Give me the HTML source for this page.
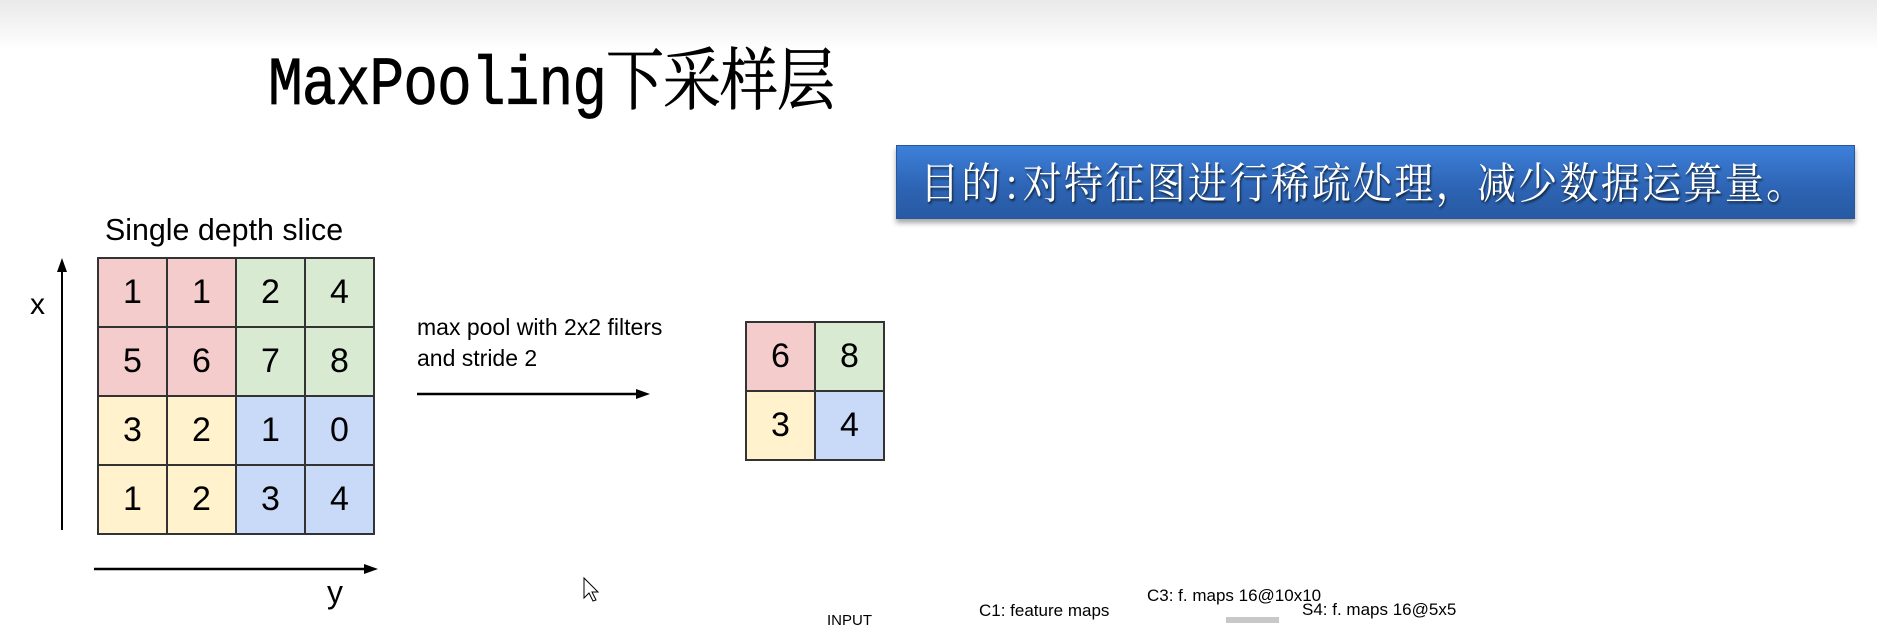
<!DOCTYPE html>
<html><head><meta charset="utf-8"><style>
html,body{margin:0;padding:0}
body{width:1877px;height:623px;position:relative;overflow:hidden;background:#fff;font-family:"Liberation Sans","Noto Sans CJK SC",sans-serif}
.top{position:absolute;left:0;top:0;width:1877px;height:50px;background:linear-gradient(#e9e9e9,#fff)}
.title{position:absolute;left:268px;top:46px;font-family:"Liberation Mono","Noto Serif CJK SC",monospace;font-size:58px;line-height:70px;color:#000;transform:scaleY(1.18);transform-origin:0 0;white-space:nowrap;letter-spacing:-1px;-webkit-text-stroke:0.6px #000}
.blue{position:absolute;left:896px;top:145px;width:957px;height:72px;background:linear-gradient(#3d80da,#2d63b3 60%,#275aa3);border:1px solid #2a579b;box-shadow:0 4px 5px rgba(0,0,0,.35)}
.blue .t{position:absolute;left:22px;top:11px;height:50px;display:flex;white-space:nowrap}
.blue .t i{font-style:normal;display:block;width:41.3px;text-align:center;font-family:"Noto Serif CJK SC","Noto Sans CJK SC",serif;font-size:39px;line-height:48px;color:#fff;text-shadow:1px 2px 2px #123;transform:scaleY(1.1)}
.blue .t i.c{width:20px}
.lbl{position:absolute;white-space:nowrap;color:#000}
table{position:absolute;border-collapse:collapse}
td{border:2px solid #333;width:67px;height:67px;text-align:center;font-size:34px;padding:0}
.r{background:#f4cccc}.g{background:#d9ead3}.y{background:#fff2cc}.b{background:#c9daf8}
</style></head><body>
<div class="top"></div>
<div class="title">MaxPooling下采样层</div>
<div class="blue"><div class="t"><i>目</i><i>的</i><i class="c">:</i><i>对</i><i>特</i><i>征</i><i>图</i><i>进</i><i>行</i><i>稀</i><i>疏</i><i>处</i><i>理</i><i>，</i><i>减</i><i>少</i><i>数</i><i>据</i><i>运</i><i>算</i><i>量</i><i>。</i></div></div>
<div class="lbl" style="left:105px;top:212px;font-size:31px;transform:scaleX(0.98);transform-origin:0 0">Single depth slice</div>
<table style="left:97px;top:257px">
<tr><td class="r">1</td><td class="r">1</td><td class="g">2</td><td class="g">4</td></tr>
<tr><td class="r">5</td><td class="r">6</td><td class="g">7</td><td class="g">8</td></tr>
<tr><td class="y">3</td><td class="y">2</td><td class="b">1</td><td class="b">0</td></tr>
<tr><td class="y">1</td><td class="y">2</td><td class="b">3</td><td class="b">4</td></tr>
</table>
<table style="left:745px;top:321px">
<tr><td class="r">6</td><td class="g">8</td></tr>
<tr><td class="y">3</td><td class="b">4</td></tr>
</table>
<svg style="position:absolute;left:0;top:0" width="1877" height="623">
<line x1="62" y1="530" x2="62" y2="270" stroke="#000" stroke-width="2"/>
<polygon points="62,258 57,272 67,272" fill="#000"/>
<line x1="94" y1="569" x2="365" y2="569" stroke="#000" stroke-width="2.5"/>
<polygon points="378,569 364,564 364,574" fill="#000"/>
<line x1="417" y1="394" x2="638" y2="394" stroke="#000" stroke-width="2.5"/>
<polygon points="650,394 636,389 636,399" fill="#000"/>
<path d="M584,578 L584,598 L589,593 L593,601 L596,600 L592,592 L598,592 Z" fill="#fff" stroke="#000" stroke-width="1"/>
<rect x="1226" y="617" width="53" height="8" fill="#c8c8c8"/>
</svg>
<div class="lbl" style="left:30px;top:288px;font-size:30px">x</div>
<div class="lbl" style="left:327px;top:574px;font-size:32px">y</div>
<div class="lbl" style="left:417px;top:312px;font-size:23px;line-height:31px">max pool with 2x2 filters<br>and stride 2</div>
<div class="lbl" style="left:827px;top:612px;font-size:15px">INPUT</div>
<div class="lbl" style="left:979px;top:601px;font-size:17px">C1: feature maps</div>
<div class="lbl" style="left:1147px;top:586px;font-size:17px">C3: f. maps 16@10x10</div>
<div class="lbl" style="left:1302px;top:600px;font-size:17px">S4: f. maps 16@5x5</div>
</body></html>
